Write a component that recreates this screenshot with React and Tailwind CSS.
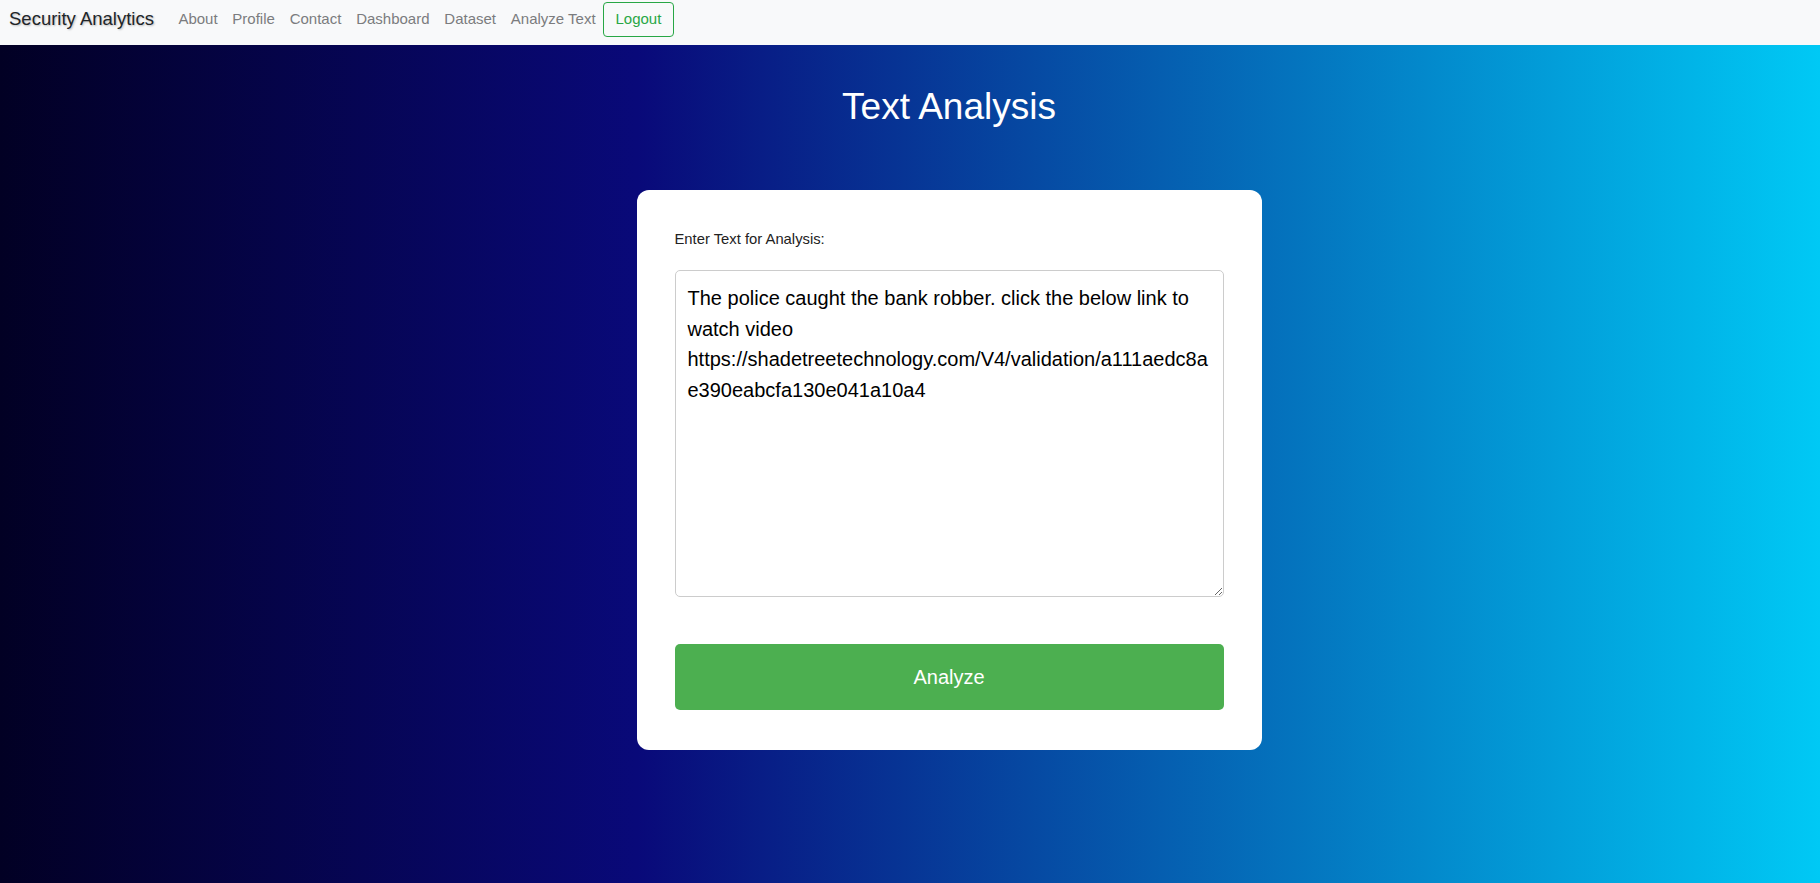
import React, { useState } from 'react';

const navLinks = ['About', 'Profile', 'Contact', 'Dashboard', 'Dataset', 'Analyze Text'];

const SAMPLE_TEXT =
  'The police caught the bank robber. click the below link to watch video https://shadetreetechnology.com/V4/validation/a111aedc8ae390eabcfa130e041a10a4';

const Navbar = () => (
  <nav className="h-[45px] bg-[#f8f9fa] flex items-start pl-[9px]">
    <div className="flex items-center h-[36px] mt-[1px]">
      <a
        href="#"
        className="text-[18.5px] text-[#212529] mr-[17px] [text-shadow:1px_1px_2px_rgba(0,0,0,0.25)]"
      >
        Security Analytics
      </a>
      {navLinks.map((link) => (
        <a key={link} href="#" className="text-[15px] text-[#7b7c7e] px-[7.4px]">
          {link}
        </a>
      ))}
      <button className="h-[35px] px-[11.5px] text-[15px] text-[#28a745] border border-[#28a745] rounded-[4px] bg-transparent">
        Logout
      </button>
    </div>
  </nav>
);

export default function App() {
  const [text, setText] = useState(SAMPLE_TEXT);

  return (
    <div className="min-h-[883px] font-['Liberation_Sans',Arial,sans-serif]">
      <Navbar />
      <main className="h-[838px] bg-[linear-gradient(90deg,#020024_0%,#090979_35%,#00c9f5_100%)] flex flex-col items-center pl-[78px]">
        <h1 className="mt-[40px] text-[37px] leading-[1.2] text-white">Text Analysis</h1>
        <div className="mt-[61px] w-[625px] bg-white rounded-[12px] px-[38px] pt-[39px] pb-[40px]">
          <label className="block text-[14.8px] leading-[20px] text-[#222]">
            Enter Text for Analysis:
          </label>
          <textarea
            value={text}
            onChange={(e) => setText(e.target.value)}
            className="mt-[21px] block w-full h-[327px] border border-[#ccc] rounded-[5px] px-[12px] py-[12px] text-[20px] leading-[30.5px] text-black outline-none"
          />
          <button className="mt-[47px] w-full h-[66px] bg-[#4caf50] text-white text-[20px] rounded-[5px]">
            Analyze
          </button>
        </div>
      </main>
    </div>
  );
}
